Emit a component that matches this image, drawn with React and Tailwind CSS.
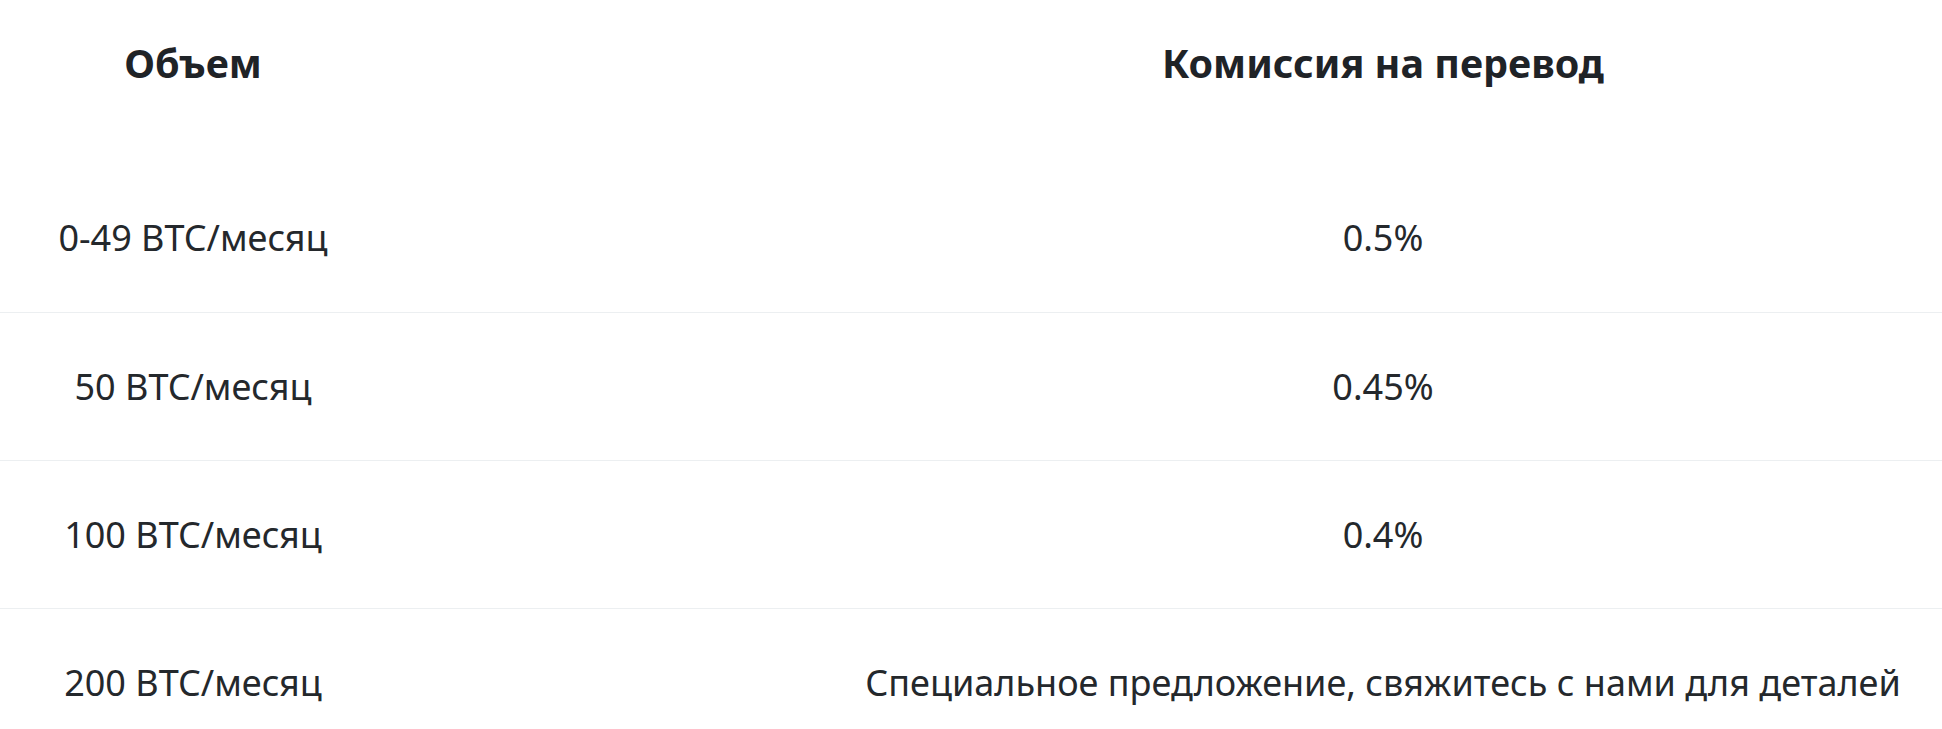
const rows = [
  ["0-49 BTC/месяц", "0.5%"],
  ["50 BTC/месяц", "0.45%"],
  ["100 BTC/месяц", "0.4%"],
  ["200 BTC/месяц", "Специальное предложение, свяжитесь с нами для деталей"],
];

export default function App() {
  return (
    <div className="w-[1942px] h-[729px] overflow-hidden bg-white font-['Noto_Sans',sans-serif] text-[#24282c]">
      <div className="w-[2380px]">
        {/* Header */}
        <div className="grid grid-cols-[386px_1994px] h-[164px] pb-[36px] items-center text-[39.5px] font-bold text-[#1f2327] leading-none">
          <div className="text-center">Объем</div>
          <div className="text-center">Комиссия на перевод</div>
        </div>

        {/* Body */}
        {rows.map(([volume, fee], i) => (
          <div
            key={volume}
            className={`grid grid-cols-[386px_1994px] h-[148px] items-center text-[36px] leading-none ${
              i > 0 ? "border-t border-[#eceff1]" : ""
            }`}
          >
            <div className="text-center">{volume}</div>
            <div className="text-center">{fee}</div>
          </div>
        ))}
      </div>
    </div>
  );
}
